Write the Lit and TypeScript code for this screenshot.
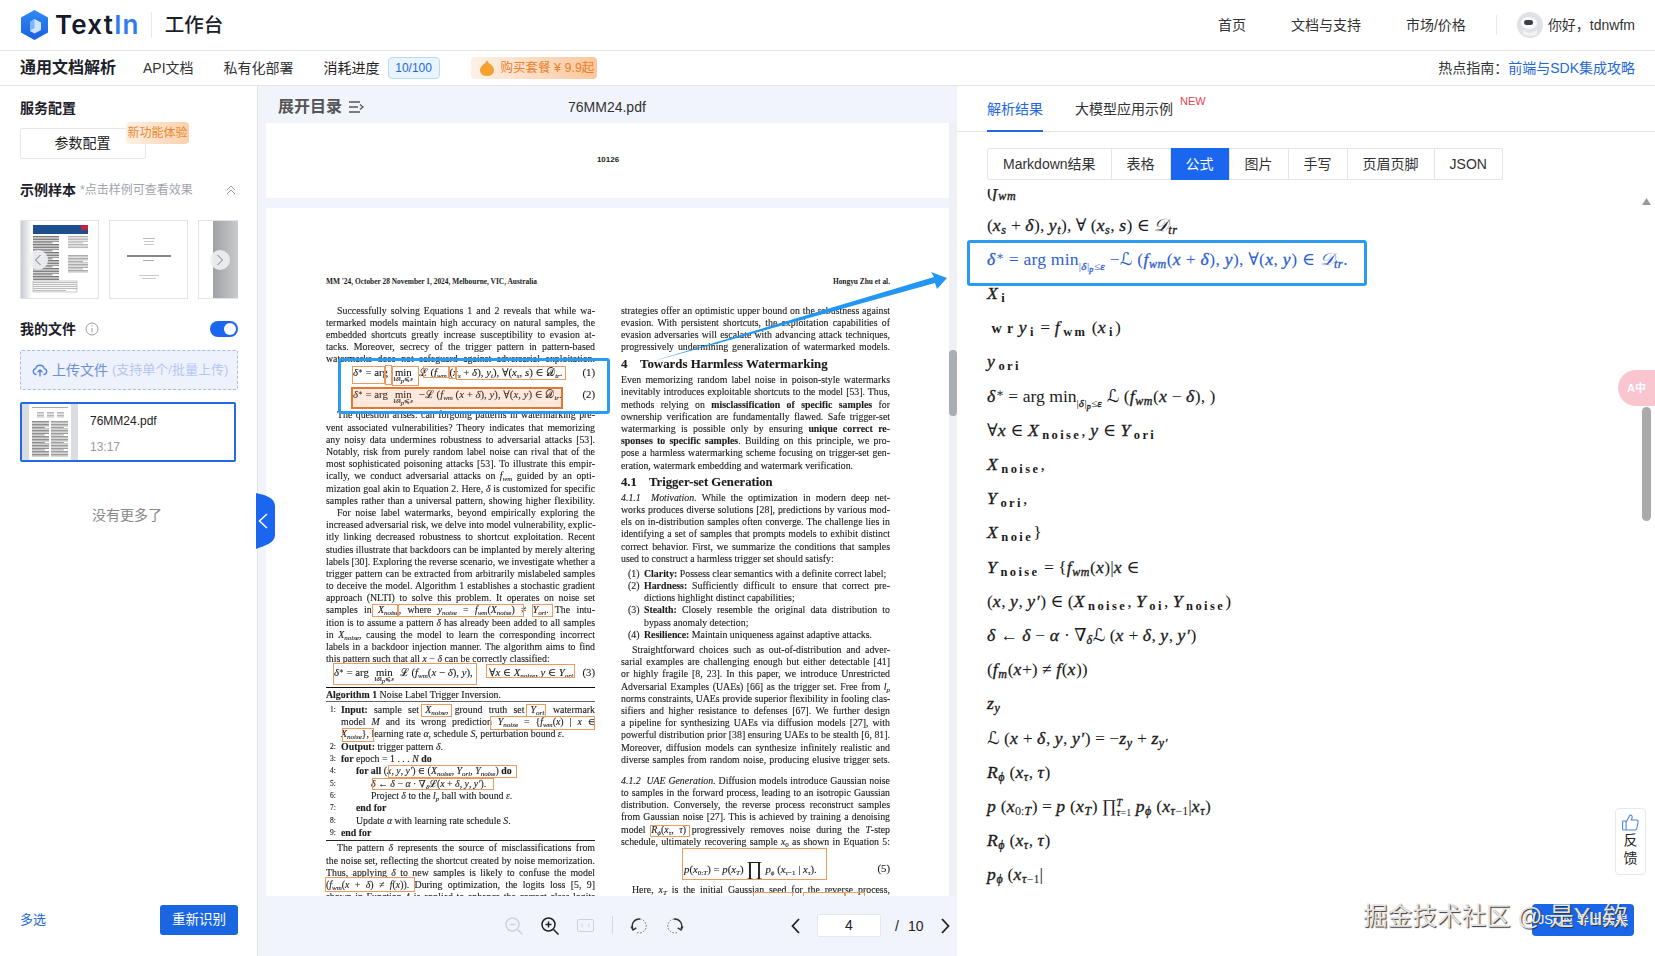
import { LitElement, html, css, svg } from 'lit';
import { customElement } from 'lit/decorators.js';

const SANS = css`"Liberation Sans", "Noto Sans CJK SC", sans-serif`;

// math bits shared by the pdf page and the formula list
const S = html`<span class="scr">ℒ</span>`;
const D = html`<span class="scr">𝒟</span>`;
const fwm = html`<i>f</i><sub><i>wm</i></sub>`;
const xn = html`<i>X</i><sub><i>noise</i></sub>`;
const yo = html`<i>Y</i><sub><i>ori</i></sub>`;

type Line = { t: unknown; c?: string };
const j = (t: unknown, c = ''): Line => ({ t, c: 'j ' + c });
const l = (t: unknown, c = ''): Line => ({ t, c });

const minBlock = html`<span class="min">min<small>‖<i>δ</i>‖<sub><i>p</i></sub>⩽<i>ε</i></small></span>`;

const leftCol: Line[] = [
  j('Successfully solving Equations 1 and 2 reveals that while wa-', 'ind'),
  j('termarked models maintain high accuracy on natural samples, the'),
  j('embedded shortcuts greatly increase susceptibility to evasion at-'),
  j('tacks. Moreover, secrecy of the trigger pattern in pattern-based'),
  j('watermarks does not safeguard against adversarial exploitation.'),
  l(html`<i>δ</i><sup>∗</sup> = arg ${minBlock} ${S} (${fwm} (<i>x<sub>s</sub></i> + <i>δ</i>), <i>y<sub>t</sub></i>), ∀(<i>x<sub>s</sub></i>, <i>s</i>) ∈ ${D}<sub><i>tr</i></sub>.<b class="no">(1)</b>`, 'eq'),
  l(html`<i>δ</i><sup>∗</sup> = arg ${minBlock} −${S} (${fwm} (<i>x</i> + <i>δ</i>), <i>y</i>), ∀(<i>x</i>, <i>y</i>) ∈ ${D}<sub><i>tr</i></sub>.<b class="no">(2)</b>`, 'eq'),
  j('The question arises: can forgoing patterns in watermarking pre-', 'ind'),
  j('vent associated vulnerabilities? Theory indicates that memorizing'),
  j('any noisy data undermines robustness to adversarial attacks [53].'),
  j('Notably, risk from purely random label noise can rival that of the'),
  j('most sophisticated poisoning attacks [53]. To illustrate this empir-'),
  j(html`ically, we conduct adversarial attacks on ${fwm} guided by an opti-`),
  j(html`mization goal akin to Equation 2. Here, <i>δ</i> is customized for specific`),
  j('samples rather than a universal pattern, showing higher flexibility.'),
  j('For noise label watermarks, beyond empirically exploring the', 'ind'),
  j('increased adversarial risk, we delve into model vulnerability, explic-'),
  j('itly linking decreased robustness to shortcut exploitation. Recent'),
  j('studies illustrate that backdoors can be implanted by merely altering'),
  j('labels [30]. Exploring the reverse scenario, we investigate whether a'),
  j('trigger pattern can be extracted from arbitrarily mislabeled samples'),
  j('to deceive the model. Algorithm 1 establishes a stochastic gradient'),
  j('approach (NLTI) to solve this problem. It operates on noise set'),
  j(html`samples in ${xn}, where <i>y<sub>noise</sub></i> = ${fwm}(${xn}) ≠ ${yo}. The intu-`),
  j(html`ition is to assume a pattern <i>δ</i> has already been added to all samples`),
  j(html`in ${xn}, causing the model to learn the corresponding incorrect`),
  j('labels in a backdoor injection manner. The algorithm aims to find'),
  l(html`this pattern such that all <i>x</i> − <i>δ</i> can be correctly classified:`),
  l(html`<i>δ</i><sup>∗</sup> = arg ${minBlock} ${S} (${fwm}(<i>x</i> − <i>δ</i>), <i>y</i>),&nbsp;&nbsp;&nbsp;&nbsp;&nbsp; ∀<i>x</i> ∈ ${xn}, <i>y</i> ∈ ${yo}.<b class="no">(3)</b>`, 'eq eq3'),
  l(html`<b>Algorithm 1</b> Noise Label Trigger Inversion.`, 'cap'),
  l(html`<em>1:</em><b>Input:</b> sample set ${xn}, ground truth set ${yo}, watermark`, 'step j'),
  l(html`model <i>M</i> and its wrong prediction ${html`<i>Y<sub>noise</sub></i>`} = {${fwm}(<i>x</i>) | <i>x</i> ∈`, 'step j cont'),
  l(html`${xn}}, learning rate <i>α</i>, schedule <i>S</i>, perturbation bound <i>ε</i>.`, 'step cont'),
  l(html`<em>2:</em><b>Output:</b> trigger pattern <i>δ</i>.`, 'step'),
  l(html`<em>3:</em><b>for</b> epoch = 1 . . . <i>N</i> <b>do</b>`, 'step'),
  l(html`<em>4:</em><span class="tab1"></span><b>for all</b> (<i>x</i>, <i>y</i>, <i>y′</i>) ∈ (${xn}, ${yo}, <i>Y<sub>noise</sub></i>) <b>do</b>`, 'step'),
  l(html`<em>5:</em><span class="tab2"></span><i>δ</i> ← <i>δ</i> − <i>α</i> · ∇<sub><i>δ</i></sub>${S}(<i>x</i> + <i>δ</i>, <i>y</i>, <i>y′</i>).`, 'step'),
  l(html`<em>6:</em><span class="tab2"></span>Project <i>δ</i> to the <i>l<sub>p</sub></i> ball with bound <i>ε</i>.`, 'step'),
  l(html`<em>7:</em><span class="tab1"></span><b>end for</b>`, 'step'),
  l(html`<em>8:</em><span class="tab1"></span>Update <i>α</i> with learning rate schedule <i>S</i>.`, 'step'),
  l(html`<em>9:</em><b>end for</b>`, 'step end'),
  j(html`The pattern <i>δ</i> represents the source of misclassifications from`, 'ind'),
  j('the noise set, reflecting the shortcut created by noise memorization.'),
  j(html`Thus, applying <i>δ</i> to new samples is likely to confuse the model`),
  j(html`(${fwm}(<i>x</i> + <i>δ</i>) ≠ <i>f</i>(<i>x</i>)). During optimization, the logits loss [5, 9]`),
  j('shown in Function 4 is applied to enhance the correct class logits'),
];

const rightCol: Line[] = [
  j('strategies offer an optimistic upper bound on the robustness against'),
  j('evasion. With persistent shortcuts, the exploitation capabilities of'),
  j('evasion adversaries will escalate with advancing attack techniques,'),
  j('progressively undermining generalization of watermarked models.'),
  l(html`<span class="num">4</span>Towards Harmless Watermarking`, 'h1'),
  j('Even memorizing random label noise in poison-style watermarks'),
  j('inevitably introduces exploitable shortcuts to the model [53]. Thus,'),
  j(html`methods relying on <b>misclassification of specific samples</b> for`),
  j('ownership verification are fundamentally flawed. Safe trigger-set'),
  j(html`watermarking is possible only by ensuring <b>unique correct re-</b>`),
  j(html`<b>sponses to specific samples</b>. Building on this principle, we pro-`),
  j('pose a harmless watermarking scheme focusing on trigger-set gen-'),
  l('eration, watermark embedding and watermark verification.'),
  l(html`<span class="num">4.1</span>Trigger-set Generation`, 'h1 h2'),
  j(html`<i>4.1.1 &nbsp;Motivation.</i> While the optimization in modern deep net-`),
  j('works produces diverse solutions [28], predictions by various mod-'),
  j('els on in-distribution samples often converge. The challenge lies in'),
  j('identifying a set of samples that prompts models to exhibit distinct'),
  j('correct behavior. First, we summarize the conditions that samples'),
  l('used to construct a harmless trigger set should satisfy:'),
  l(html`<em>(1)</em><b>Clarity:</b> Possess clear semantics with a definite correct label;`, 'li first'),
  l(html`<em>(2)</em><b>Hardness:</b> Sufficiently difficult to ensure that correct pre-`, 'li j'),
  l('dictions highlight distinct capabilities;', 'li cont'),
  l(html`<em>(3)</em><b>Stealth:</b> Closely resemble the original data distribution to`, 'li j'),
  l('bypass anomaly detection;', 'li cont'),
  l(html`<em>(4)</em><b>Resilience:</b> Maintain uniqueness against adaptive attacks.`, 'li'),
  j('Straightforward choices such as out-of-distribution and adver-', 'ind after'),
  j('sarial examples are challenging enough but either detectable [41]'),
  j('or highly fragile [8, 23]. In this paper, we introduce Unrestricted'),
  j(html`Adversarial Examples (UAEs) [66] as the trigger set. Free from <i>l<sub>p</sub></i>`),
  j('norms constraints, UAEs provide superior flexibility in fooling clas-'),
  j('sifiers and higher resistance to defenses [67]. We further design'),
  j('a pipeline for synthesizing UAEs via diffusion models [27], with'),
  j('powerful distribution prior [38] ensuring UAEs to be stealth [6, 81].'),
  j('Moreover, diffusion models can synthesize infinitely realistic and'),
  j('diverse samples from random noise, producing elusive trigger sets.'),
  j(html`<i>4.1.2 &nbsp;UAE Generation.</i> Diffusion models introduce Gaussian noise`, 'after2'),
  j('to samples in the forward process, leading to an isotropic Gaussian'),
  j('distribution. Conversely, the reverse process reconstruct samples'),
  j('from Gaussian noise [27]. This is achieved by training a denoising'),
  j(html`model <i>R<sub>ϕ</sub></i>(<i>x<sub>τ</sub></i>, <i>τ</i>) progressively removes noise during the <i>T</i>-step`),
  j(html`schedule, ultimately recovering sample <i>x</i><sub>0</sub> as shown in Equation 5:`),
  l(html`<span class="eq5"><i>p</i>(<i>x</i><sub>0:<i>T</i></sub>) = <i>p</i>(<i>x<sub>T</sub></i>) <span class="prod">∏</span> <i>p<sub>ϕ</sub></i> (<i>x</i><sub><i>τ</i>−1</sub> | <i>x<sub>τ</sub></i>).</span><b class="no">(5)</b>`, 'eq eqb'),
  j(html`Here, <i>x<sub>T</sub></i> is the initial Gaussian seed for the reverse process,`, 'ind'),
  j(html`yields the denoising model <i>R<sub>ϕ</sub></i>(<i>x<sub>τ</sub></i>, <i>τ</i>) and <i>f</i>(<i>x</i>) that are`),
];

// orange boxes in screen coordinates: x1, y1, x2, y2, filled
const marks: [number, number, number, number, boolean?][] = [
  [352, 366, 385, 384], [385, 365, 392, 385], [392, 366, 419, 386], [423, 366, 449, 378],
  [449, 366, 456, 379], [456, 366, 566, 380], [351, 387, 563, 409, true],
  [372, 604, 398, 617], [398, 604, 524, 617], [532, 604, 553, 617],
  [333, 663, 477, 685], [486, 664, 575, 678],
  [421, 704, 452, 717], [526, 704, 546, 717], [490, 716, 595, 730], [342, 728, 374, 742],
  [388, 765, 517, 778], [372, 778, 494, 790], [325, 877, 415, 892],
  [650, 825, 690, 837], [682, 848, 827, 880], [753, 892, 793, 900], [803, 892, 845, 900], [845, 892, 865, 900],
];

const sf = (s: string) => html`<sub class="w">${s}</sub>`;
const formulas: unknown[] = [
  html`(<i>f<sub>wm</sub></i>`,
  html`(<i>x<sub>s</sub></i> + <i>δ</i>), <i>y<sub>t</sub></i>), ∀ (<i>x<sub>s</sub></i>, <i>s</i>) ∈ ${D}<sub><i>tr</i></sub>`,
  html`<span class="hit"><i>δ</i><sup>∗</sup> = arg min<sub class="lim">|<i>δ</i>|<sub><i>p</i></sub>≤<i>ε</i></sub> −${S} (<i>f<sub>wm</sub></i>(<i>x</i> + <i>δ</i>), <i>y</i>), ∀(<i>x</i>, <i>y</i>) ∈ ${D}<sub><i>tr</i></sub>.</span>`,
  html`<i>X</i>${sf('i')}`,
  html`&nbsp;<b class="w2">w r</b> <i>y</i>${sf('i')} = <i>f</i>${sf('wm')} (<i>x</i>${sf('i')})`,
  html`<i>y</i>${sf('ori')}`,
  html`<i>δ</i><sup>∗</sup> = arg min<sub class="lim">|<i>δ</i>|<sub><i>p</i></sub>≤<i>ε</i></sub> ${S} (<i>f<sub>wm</sub></i>(<i>x</i> − <i>δ</i>), )`,
  html`∀<i>x</i> ∈ <i>X</i>${sf('noise')}, <i>y</i> ∈ <i>Y</i>${sf('ori')}`,
  html`<i>X</i>${sf('noise')},`,
  html`<i>Y</i>${sf('ori')},`,
  html`<i>X</i>${sf('noie')}}`,
  html`<i>Y</i>${sf('noise')} = {<i>f<sub>wm</sub></i>(<i>x</i>)|<i>x</i> ∈`,
  html`(<i>x</i>, <i>y</i>, <i>y′</i>) ∈ (<i>X</i>${sf('noise')}, <i>Y</i>${sf('oi')}, <i>Y</i>${sf('noise')})`,
  html`<i>δ</i> ← <i>δ</i> − <i>α</i> · ∇<sub><i>δ</i></sub>${S} (<i>x</i> + <i>δ</i>, <i>y</i>, <i>y′</i>)`,
  html`(<i>f<sub>m</sub></i>(<i>x</i>+) ≠ <i>f</i>(<i>x</i>))`,
  html`<i>z<sub>y</sub></i>`,
  html`${S} (<i>x</i> + <i>δ</i>, <i>y</i>, <i>y′</i>) = −<i>z<sub>y</sub></i> + <i>z<sub>y′</sub></i>`,
  html`<i>R<sub>ϕ</sub></i> (<i>x<sub>τ</sub></i>, <i>τ</i>)`,
  html`<i>p</i> (<i>x</i><sub>0:<i>T</i></sub>) = <i>p</i> (<i>x<sub>T</sub></i>) ∏<span class="lims"><sup><i>T</i></sup><sub><i>τ</i>=1</sub></span> <i>p<sub>ϕ</sub></i> (<i>x</i><sub><i>τ</i>−1</sub>|<i>x<sub>τ</sub></i>)`,
  html`<i>R<sub>ϕ</sub></i> (<i>x<sub>τ</sub></i>, <i>τ</i>)`,
  html`<i>p<sub>ϕ</sub></i> (<i>x</i><sub><i>τ</i>−1</sub>|`,
];

// tiny fake text block for the thumbnails
const bars = (x: number, y: number, w: number, n: number, step: number, color: string) =>
  Array.from({ length: n }, (_, i) => svg`<rect x=${x} y=${y + i * step} width=${w - (i % 5 === 4 ? w * 0.25 : 0)} height=${step * 0.55} fill=${color}></rect>`);

@customElement('pdf-page')
export class PdfPage extends LitElement {
  static override styles = css`
    :host {
      display: block;
      position: relative;
      width: 684px;
      height: 700px;
      background: #fff;
      overflow: hidden;
      color: #1c1c1c;
      font: 9.85px/12.2px "Liberation Serif", "DejaVu Serif", serif;
      padding-top: 68px;
      box-sizing: border-box;
    }
    .run { display: flex; justify-content: space-between; padding: 0 60px; font-size: 7.4px; font-weight: bold; height: 12px; line-height: 12px; }
    .cols { display: flex; gap: 26px; padding: 0 60px; margin-top: 16.5px; filter: blur(0.25px); -webkit-text-stroke: 0.12px #1c1c1c; }
    .col { width: 269px; flex: none; }
    .ln { height: 12.2px; white-space: nowrap; }
    .j { text-align: justify; text-align-last: justify; }
    .ind { padding-left: 11px; }
    sub { font-size: 7px; line-height: 0; vertical-align: -2px; }
    sup { font-size: 7px; line-height: 0; vertical-align: 3px; }
    .eq { height: 22px; line-height: 15px; font-size: 10.8px; padding-left: 27px; position: relative; }
    .eq3 { height: 22px; padding-left: 8px; line-height: 15px; }
    .eqb { height: 31px; line-height: 31px; margin-top: 5px; padding-left: 0; }
    .eq5 { display: inline-block; padding-left: 63px; }
    .prod { font-size: 20px; vertical-align: -2px; }
    .no { position: absolute; right: 0; top: 0; font-weight: normal; font-style: normal; }
    .min { display: inline-flex; flex-direction: column; align-items: center; line-height: 8px; vertical-align: top; margin: 3px 3px 0; }
    .min small { font-size: 7px; line-height: 7px; }
    .cap { border-top: 1px solid #111; border-bottom: 1px solid #666; height: 13px; line-height: 13px; margin-bottom: 1.5px; }
    .step { padding-left: 15px; position: relative; height: 12.3px; line-height: 12.3px; }
    .step em { position: absolute; left: 4px; font-style: normal; font-size: 7.5px; }
    .end { border-bottom: 1px solid #222; height: 13.5px; margin-bottom: 1px; }
    .tab1 { display: inline-block; width: 15px; }
    .tab2 { display: inline-block; width: 30px; }
    .h1 { font-size: 12.9px; font-weight: bold; height: 14px; line-height: 14px; margin: 4px 0 3px; }
    .h2 { font-size: 12.7px; margin: 3px 0 3px; }
    .num { display: inline-block; width: 19px; }
    .h2 .num { width: 28px; }
    .li { padding-left: 23px; position: relative; }
    .li em { position: absolute; left: 7px; font-style: normal; }
    .first { margin-top: 3px; }
    .after { margin-top: 3px; }
    .after2 { margin-top: 9px; }
    .mark { position: absolute; box-sizing: border-box; border: 1.5px solid #ef9a5c; }
    .mark.on { border: 2px solid #e8772e; background: rgba(240, 130, 60, 0.18); }
  `;

  override render() {
    const row = (ln: Line) => html`<div class="ln ${ln.c ?? ''}">${ln.t}</div>`;
    return html`
      <div class="run"><span>MM '24, October 28 November 1, 2024, Melbourne, VIC, Australia</span><span>Hongyu Zhu et al.</span></div>
      <div class="cols">
        <div class="col">${leftCol.map(row)}</div>
        <div class="col">${rightCol.map(row)}</div>
      </div>
      ${marks.map(
        ([x1, y1, x2, y2, on]) => html`<div class="mark ${on ? 'on' : ''}"
          style="left:${x1 - 266}px;top:${y1 - 208}px;width:${x2 - x1}px;height:${y2 - y1}px"></div>`
      )}
    `;
  }
}

@customElement('app-root')
export class AppRoot extends LitElement {
  static override styles = css`
    :host {
      display: flex;
      flex-direction: column;
      position: relative;
      width: 1655px;
      height: 956px;
      overflow: hidden;
      background: #fff;
      color: #222;
      font: 14px/20px ${SANS};
    }
    .top { display: flex; align-items: center; height: 50px; flex: none; border-bottom: 1px solid #e3e3e3; padding-left: 21px; }
    .brand { font: 600 26px/30px Inter, ${SANS}; letter-spacing: 1.2px; margin-left: 7px; color: #141a2b; }
    .brand span { color: #2e7df0; }
    .work { margin-left: 11px; padding-left: 13px; border-left: 1px solid #e8e8e8; font-size: 19.5px; font-weight: 500; line-height: 26px; color: #1c2029; }
    .nav { margin-left: auto; display: flex; align-items: center; }
    .nav a { margin-right: 45px; color: #333; }
    .nav .user { display: flex; align-items: center; border-left: 1px solid #e8e8e8; margin-left: -15px; padding-left: 20px; height: 20px; margin-right: 20px; color: #333; }
    .user svg { margin-right: 5px; }

    .sub { display: flex; align-items: center; height: 34px; flex: none; border-bottom: 1px solid #e3e3e3; padding: 0 20px; }
    .sub h1 { font-size: 16px; font-weight: 700; margin: 0 27px 0 0; color: #1c2029; }
    .sub > a { margin-right: 30px; color: #333; }
    .used { margin: 0 0 0 8px; box-sizing: border-box; width: 52px; height: 22px; line-height: 20px; text-align: center; font-size: 12px; color: #2468d8; background: #e8f4ff; border: 1px solid #b5dbf7; border-radius: 4px; }
    .buy { display: flex; align-items: center; margin-left: 31px; height: 22px; width: 126px; box-sizing: border-box; padding-left: 9px; font-size: 12.5px; white-space: nowrap; color: #e8802c; background: linear-gradient(90deg, #fdf1e8, #fbc79b); border-radius: 4px; }
    .buy svg { margin-right: 7px; flex: none; }
    .hot { margin-left: auto; color: #333; }
    .hot a { color: #2468d8; }

    .main { flex: 1; display: flex; min-height: 0; }
    .side { flex: none; box-sizing: border-box; border-right: 1px solid #e3e3e3; width: 258px; padding: 12px 19px 21px 20px; display: flex; flex-direction: column; }
    h3 { margin: 0; font-size: 14px; line-height: 20px; font-weight: 700; color: #1c2029; }
    .conf { position: relative; margin-top: 10px; width: 126px; height: 31px; box-sizing: border-box; border: 1px solid #e4e6ea; border-radius: 2px; text-align: center; line-height: 29px; padding-right: 1px; }
    .tag { position: absolute; left: 105px; top: -7px; width: 63px; height: 22px; line-height: 22px; font-size: 12px; color: #e8892c; background: linear-gradient(90deg, #fdf0e6, #fbd0ac); border-radius: 4px; }
    .samples { display: flex; align-items: center; margin-top: 21px; }
    .samples small { margin-left: 4px; font-size: 12px; color: #a0a4ab; }
    .samples svg { margin-left: auto; margin-right: 1px; }
    .thumbs { position: relative; display: flex; gap: 10px; margin-top: 20px; height: 79px; width: 218px; overflow: hidden; }
    .thumb { flex: none; width: 79px; height: 79px; box-sizing: border-box; border: 1px solid #e1e3e7; background: #fff; }
    .thumb svg { display: block; }
    .round { position: absolute; top: 30px; width: 20px; height: 20px; border-radius: 50%; background: rgba(240, 241, 244, 0.9); display: flex; align-items: center; justify-content: center; }
    .files { display: flex; align-items: center; margin-top: 20px; }
    .files svg.i { margin-left: 9px; }
    .toggle { margin-left: auto; position: relative; width: 28px; height: 16px; border-radius: 8px; background: #1a66ef; }
    .toggle::after { content: ''; position: absolute; right: 2px; top: 2px; width: 12px; height: 12px; border-radius: 50%; background: #fff; }
    .upload { margin-top: 11px; height: 40px; box-sizing: border-box; width: 218px; border: 1px dashed #a9bde8; border-radius: 2px; background: #eef2fd; display: flex; align-items: center; padding-left: 11px; color: #6c90d8; }
    .upload svg { margin-right: 4px; }
    .upload small { margin-left: 4px; font-size: 13px; color: #b5c7f0; white-space: nowrap; }
    .card { margin-top: 12px; width: 216px; height: 60px; box-sizing: border-box; border: 2px solid #2468e8; border-radius: 2px; display: flex; }
    .card .pv { width: 56px; background: #d9dde1; display: flex; justify-content: center; flex: none; }
    .card .pv svg { display: block; }
    .card .meta { margin-left: 12px; font-size: 12px; padding-top: 7px; }
    .card .time { color: #9a9a9a; margin-top: 6px; }
    .nomore { margin-top: 43px; text-align: center; color: #888; padding-right: 4px; }
    .actions { margin-top: auto; display: flex; justify-content: space-between; align-items: center; }
    .actions a { color: #2468d8; font-size: 13px; }
    .btn { width: 78px; height: 30px; line-height: 30px; text-align: center; color: #fff; background: #1a66e0; border-radius: 3px; font-size: 13.5px; }

    .mid { width: 699px; flex: none; background: #f1f4fb; display: flex; flex-direction: column; min-height: 0; }
    .mid-head { display: flex; align-items: center; height: 37px; flex: none; padding: 4px 0 0 20px; box-sizing: border-box; position: relative; }
    .mid-head b { font-size: 16px; font-weight: 700; color: #555; }
    .mid-head svg { margin-left: 7px; }
    .mid-head span { position: absolute; left: 310px; font-size: 14px; color: #333; }
    .view { flex: 1; min-height: 0; position: relative; padding-left: 8px; overflow: hidden; }
    .stub { width: 684px; height: 75px; background: #fff; text-align: center; line-height: 74px; font-size: 8px; font-weight: bold; margin-bottom: 10px; }
    .bar { position: absolute; right: 0; top: 0; bottom: 0; width: 8px; background: #eef0f5; }
    .bar::after { content: ''; position: absolute; left: 0; top: 227px; width: 8px; height: 66px; border-radius: 4px; background: #a9aeb5; }
    .tools { height: 60px; flex: none; position: relative; }
    .tools > * { position: absolute; }
    .page-in { left: 559px; top: 18px; width: 64px; height: 23px; background: #fff; border-radius: 2px; border: 1px solid #e4e7ee; box-sizing: border-box; text-align: center; line-height: 21px; }
    .tools .sep { left: 354px; top: 20px; width: 1px; height: 18px; background: #d4d7dd; }
    .slash { left: 637px; top: 20px; }
    .total { left: 650px; top: 20px; }

    .right { flex: 1; min-width: 0; position: relative; display: flex; flex-direction: column; }
    .tabs { display: flex; flex: none; border-bottom: 1px solid #e3e3e3; padding-left: 30px; gap: 32px; box-sizing: border-box; height: 46px; }
    .tabs a { position: relative; line-height: 46px; color: #333; }
    .tabs a.on { color: #2468e0; }
    .tabs a.on::after { content: ''; position: absolute; left: 0; right: 0; bottom: -1px; height: 2px; background: #2468e0; }
    .tabs sup { position: absolute; left: 105px; top: 5px; line-height: 20px; font-size: 11px; color: #e8434f; }
    .seg { display: flex; align-self: flex-start; margin: 16px 0 0 30px; border: 1px solid #e2e4e8; border-radius: 2px; height: 32px; box-sizing: border-box; flex: none; }
    .seg span { padding: 0 15px; line-height: 30px; border-left: 1px solid #e2e4e8; color: #333; }
    .seg span:first-child { border-left: 0; }
    .seg span.on { background: #1a66ef; color: #fff; margin: -1px 0; line-height: 32px; }
    .list { flex: 1; margin-top: 9px; padding-left: 30px; overflow: hidden; min-height: 0; font: 17.6px/20px "Liberation Serif", "DejaVu Serif", serif; color: #1c1c1c; }
    .rows { margin-top: -15.5px; }
    .rows div { height: 34.2px; line-height: 34.2px; white-space: nowrap; }
    .rows sub { font-size: 12px; line-height: 0; vertical-align: -3px; }
    .rows sup { font-size: 12px; line-height: 0; vertical-align: 5px; }
    .rows i { letter-spacing: 0.6px; -webkit-text-stroke: 0.35px currentColor; }
    .rows sub.w { font-weight: 700; letter-spacing: 2.4px; margin-left: 3px; font-size: 12.5px; }
    .rows .w2 { letter-spacing: 1px; font-size: 14px; }
    .rows sub.lim { font-size: 11px; vertical-align: -5px; }
    .rows sub.lim sub { font-size: 8px; vertical-align: -2px; }
    .rows .hit { color: #2d5fd0; letter-spacing: 0.2px; }
    .rows .lims { display: inline-flex; flex-direction: column; vertical-align: middle; line-height: 10px; font-size: 10px; }
    .rows .lims sup, .rows .lims sub { vertical-align: baseline; line-height: 10px; font-size: 10px; }
    .scr { font-family: "DejaVu Serif", "DejaVu Sans", serif; font-style: italic; }
    .track { position: absolute; right: 4px; top: 112px; width: 9px; height: 323px; }
    .track i { position: absolute; top: 209px; left: 0; right: 0; height: 114px; background: #a9aaac; border-radius: 5px; }
    .track svg { position: absolute; left: 0; top: 0; }
    .pink { position: absolute; right: 0; top: 284px; width: 37px; height: 36px; border-radius: 18px 0 0 18px; background: #f9c6d0; display: flex; align-items: center; justify-content: center; color: #fff; font-size: 11px; font-weight: 700; }
    .fb { position: absolute; left: 658px; top: 722px; width: 31px; height: 67px; box-sizing: border-box; border: 1px solid #e6e8ec; border-radius: 4px; background: #fff; display: flex; flex-direction: column; align-items: center; padding-top: 5px; line-height: 18px; }
    .export { position: absolute; left: 575px; top: 818px; width: 102px; height: 32px; line-height: 32px; text-align: center; color: #fff; background: #1a66e8; border-radius: 4px; font-size: 13px; }
    .wm { position: absolute; left: 1363px; top: 900px; font-size: 24.6px; line-height: 34px; color: #e4e4e4; text-shadow: 1px 1px 1px #333; white-space: nowrap; font-family: ${SANS}; }

    .handle { position: absolute; left: 256px; top: 493px; }
    .overlay { position: absolute; left: 0; top: 0; pointer-events: none; }
    .hitbox { position: absolute; box-sizing: border-box; border: 3px solid #2b9bf0; border-radius: 3px; }
    .hb1 { left: 338px; top: 358px; width: 272px; height: 56px; }
    .hb2 { left: 967px; top: 240px; width: 400px; height: 46px; }
  `;

  private logo() {
    return svg`<svg width="27" height="30" viewBox="0 0 27 30">
      <defs><linearGradient id="lg" x1="0" y1="0" x2="0" y2="1"><stop offset="0" stop-color="#2f8bf4"></stop><stop offset="1" stop-color="#1a5fe0"></stop></linearGradient></defs>
      <polygon points="13.500,0 27,7.500 27,22.500 13.500,30 0,22.500 0,7.500" fill="url(#lg)"></polygon>
      <polygon points="13.500,9 20,12.500 20,20 13.500,23.500 9,21 9,12" fill="#cfe5ff"></polygon>
      <polygon points="13.500,9 9,12 9,21 13.500,18" fill="#7fb8fa"></polygon>
    </svg>`;
  }

  private thumb1() {
    return svg`<svg width="77" height="77" viewBox="0 0 77 77">
      <defs><linearGradient id="sh" x1="0" x2="1" y1="0" y2="0"><stop offset="0" stop-color="#c9cbd0"></stop><stop offset="1" stop-color="#fff"></stop></linearGradient></defs>
      <rect x="0" width="11" height="77" fill="url(#sh)"></rect>
      <rect x="12" y="4" width="55" height="9" fill="#1d4f8f"></rect><rect x="60" y="4" width="7" height="5" fill="#c2243a"></rect>
      ${bars(12, 15, 26, 28, 1.6, '#666')}${bars(47, 15, 20, 8, 1.6, '#aaa')}
      ${bars(47, 34, 20, 12, 1.5, '#999')}
      <rect x="12" y="60" width="44" height="11" fill="none" stroke="#999" stroke-width=".5"></rect>
      ${bars(12, 61, 44, 5, 2, '#bbb')}
    </svg>`;
  }

  private thumb2() {
    return svg`<svg width="77" height="77" viewBox="0 0 77 77">
      <rect x="33" y="17" width="12" height=".8" fill="#aaa"></rect><rect x="34" y="20" width="10" height=".8" fill="#bbb"></rect><rect x="34" y="23" width="10" height=".8" fill="#bbb"></rect>
      <rect x="17" y="34" width="44" height="2" fill="#888"></rect><rect x="33" y="39" width="11" height="1" fill="#aaa"></rect>
      <rect x="29" y="54" width="20" height=".8" fill="#bbb"></rect><rect x="32" y="57" width="14" height=".8" fill="#bbb"></rect>
    </svg>`;
  }

  private filePv() {
    return svg`<svg width="42" height="56" viewBox="0 0 42 56">
      <rect width="42" height="56" fill="#fff"></rect>
      ${bars(3, 3, 36, 1, 1.5, '#999')}${bars(8, 8, 7, 4, 1.5, '#aaa')}${bars(18, 8, 7, 4, 1.5, '#aaa')}${bars(28, 8, 7, 4, 1.5, '#aaa')}
      ${bars(3, 17, 17, 24, 1.5, '#777')}${bars(22, 17, 17, 24, 1.5, '#888')}
    </svg>`;
  }

  // the right turn icon is the left one mirrored
  private rotate(left: number, flip: boolean) {
    return svg`<svg style="left:${left}px;top:21px" width="18" height="18" viewBox="0 0 18 18" fill="none" stroke="#333" stroke-width="1.400">
      <g transform=${flip ? 'translate(18 0) scale(-1 1)' : ''}>
        <path d="M3 12A7 7 0 0 1 10 2"></path><path d="M10 2A7 7 0 1 1 7 15.600" stroke-dasharray="1.500 1.600" stroke-width="1" stroke="#666"></path>
        <path d="M1 9.500L3 13L6.300 10.800"></path>
      </g></svg>`;
  }

  override render() {
    return html`
      <header class="top">
        ${this.logo()}
        <div class="brand">Text<span>In</span></div>
        <div class="work">工作台</div>
        <nav class="nav">
          <a>首页</a><a>文档与支持</a><a>市场/价格</a>
          <div class="user">
            <svg width="26" height="26" viewBox="0 0 26 26"><circle cx="13" cy="13" r="13" fill="#dfe1e5"></circle><ellipse cx="12" cy="11" rx="8" ry="6" fill="#fafafa"></ellipse><rect x="7" y="8" width="9" height="5" rx="2.500" fill="#3a3f4c"></rect><path d="M6 18q7 6 14 0v4q-7 4-14 0z" fill="#f4f4f4"></path></svg>
            你好，tdnwfm
          </div>
        </nav>
      </header>

      <div class="sub">
        <h1>通用文档解析</h1>
        <a>API文档</a><a>私有化部署</a><span>消耗进度</span>
        <div class="used">10/100</div>
        <div class="buy">
          <svg width="14" height="16" viewBox="0 0 14 16"><path d="M7 0l1.600 3C12 5 14 7.500 14 10.500A7 5.500 0 0 1 0 10.500C0 7.500 2 5 5.400 3z" fill="#f5a030"></path></svg>
          购买套餐 ¥ 9.9起
        </div>
        <div class="hot">热点指南：<a>前端与SDK集成攻略</a></div>
      </div>

      <div class="main">
        <aside class="side">
          <h3>服务配置</h3>
          <div class="conf">参数配置<div class="tag">新功能体验</div></div>
          <div class="samples">
            <h3>示例样本</h3><small>*点击样例可查看效果</small>
            <svg width="12" height="12" viewBox="0 0 12 12" fill="none" stroke="#9a9a9a"><path d="M2 6l4-4 4 4M2 10l4-4 4 4"></path></svg>
          </div>
          <div class="thumbs">
            <div class="thumb">${this.thumb1()}</div>
            <div class="thumb">${this.thumb2()}</div>
            <div class="thumb"><svg width="77" height="77"><defs><linearGradient id="gs"><stop offset="0" stop-color="#a0a1a3"></stop><stop offset="1" stop-color="#d2d3d6"></stop></linearGradient></defs><rect x="14" y="0" width="30" height="77" fill="url(#gs)"></rect></svg></div>
            <div class="round" style="left:8px"><svg width="8" height="12" viewBox="0 0 8 12" fill="none" stroke="#777"><path d="M6.500 1L1.500 6l5 5"></path></svg></div>
            <div class="round" style="left:190px"><svg width="8" height="12" viewBox="0 0 8 12" fill="none" stroke="#777"><path d="M1.500 1l5 5-5 5"></path></svg></div>
          </div>
          <div class="files">
            <h3>我的文件</h3>
            <svg class="i" width="14" height="14" viewBox="0 0 14 14" fill="none" stroke="#9aa0a6"><circle cx="7" cy="7" r="6"></circle><path d="M7 6v4.500M7 3.500v1.200"></path></svg>
            <div class="toggle"></div>
          </div>
          <div class="upload">
            <svg width="16" height="14" viewBox="0 0 16 14" fill="none" stroke="#4d7fd8" stroke-width="1.300"><path d="M4.500 11.500H4A3 3 0 0 1 3.600 5.600 4.500 4.500 0 0 1 12.300 5.600 3 3 0 0 1 12 11.500h-.5"></path><path d="M8 13.500V7M5.500 9.300L8 6.800l2.500 2.500"></path></svg>
            上传文件<small>(支持单个/批量上传)</small>
          </div>
          <div class="card">
            <div class="pv">${this.filePv()}</div>
            <div class="meta"><div>76MM24.pdf</div><div class="time">13:17</div></div>
          </div>
          <div class="nomore">没有更多了</div>
          <div class="actions"><a>多选</a><div class="btn">重新识别</div></div>
        </aside>

        <section class="mid">
          <div class="mid-head">
            <b>展开目录</b>
            <svg width="15" height="12" viewBox="0 0 15 12" fill="none" stroke="#555" stroke-width="1.300"><path d="M0 1h11M0 6h9M0 11h11M11 3.500L14 6l-3 2.500"></path></svg>
            <span>76MM24.pdf</span>
          </div>
          <div class="view">
            <div class="stub">10126</div>
            <pdf-page></pdf-page>
            <div class="bar"></div>
          </div>
          <div class="tools">
            <svg style="left:246px;top:20px" width="20" height="20" viewBox="0 0 20 20" fill="none" stroke="#cfd2d8" stroke-width="1.500"><circle cx="8.500" cy="8.500" r="6.500"></circle><path d="M5.500 8.500h6M13.500 13.500l5 5"></path></svg>
            <svg style="left:282px;top:20px" width="20" height="20" viewBox="0 0 20 20" fill="none" stroke="#222" stroke-width="1.500"><circle cx="8.500" cy="8.500" r="6.500"></circle><path d="M5.500 8.500h6M8.500 5.500v6M13.500 13.500l5 5"></path></svg>
            <svg style="left:319px;top:22px" width="17" height="15" viewBox="0 0 17 15" fill="none" stroke="#cfd2d8"><rect x=".5" y="1.500" width="16" height="12" rx="1.500"></rect><path d="M5 5.500v4M8.500 6v.1M8.500 9v.1M12 5.500v4"></path></svg>
            <div class="sep"></div>
            ${this.rotate(372, false)}
            ${this.rotate(408, true)}
            <svg style="left:533px;top:22px" width="9" height="16" viewBox="0 0 9 16" fill="none" stroke="#222" stroke-width="1.800"><path d="M8 1L1.500 8 8 15"></path></svg>
            <div class="page-in">4</div>
            <span class="slash">/</span><span class="total">10</span>
            <svg style="left:683px;top:22px" width="9" height="16" viewBox="0 0 9 16" fill="none" stroke="#222" stroke-width="1.800"><path d="M1 1l6.500 7L1 15"></path></svg>
          </div>
        </section>

        <section class="right">
          <div class="tabs"><a class="on">解析结果</a><a>大模型应用示例<sup>NEW</sup></a></div>
          <div class="seg"><span>Markdown结果</span><span>表格</span><span class="on">公式</span><span>图片</span><span>手写</span><span>页眉页脚</span><span>JSON</span></div>
          <div class="list"><div class="rows">${formulas.map((f) => html`<div>${f}</div>`)}</div></div>
          <div class="track">
            <svg width="9" height="7" viewBox="0 0 9 7"><path d="M4.500 0L9 7H0z" fill="#9a9a9a"></path></svg>
            <i></i>
          </div>
          <div class="pink">A中</div>
          <div class="fb">
            <svg width="17" height="17" viewBox="0 0 17 17" fill="none" stroke="#4d84e0" stroke-width="1.100"><rect x=".6" y="7" width="3.500" height="9" rx=".8"></rect><path d="M4.200 8L8 1c2 0 2.500 1.500 2 3l-.6 2h5c1.200 0 2 1 1.700 2.200l-1.300 6.300c-.2 1-1 1.500-1.800 1.500H4.200"></path></svg>
            <span>反</span><span>馈</span>
          </div>
          <div class="export">JSON 导出结果</div>
        </section>
      </div>

      <svg class="handle" width="19" height="56" viewBox="0 0 19 56">
        <path d="M0 0C8 2 19 4 19 13V42C19 50 8 53 0 56Z" fill="#1a66ef"></path>
        <path d="M11 21L3.500 28 11 35" fill="none" stroke="#fff" stroke-width="1.500"></path>
      </svg>
      <div class="hitbox hb1"></div>
      <div class="hitbox hb2"></div>
      <svg class="overlay" width="1655" height="956">
        <polygon points="650,362 934,277 931,272 947,278 937,289 935,283" fill="#2196f3"></polygon>
      </svg>
      <div class="wm">掘金技术社区 @ 是Yu欸</div>
    `;
  }
}
